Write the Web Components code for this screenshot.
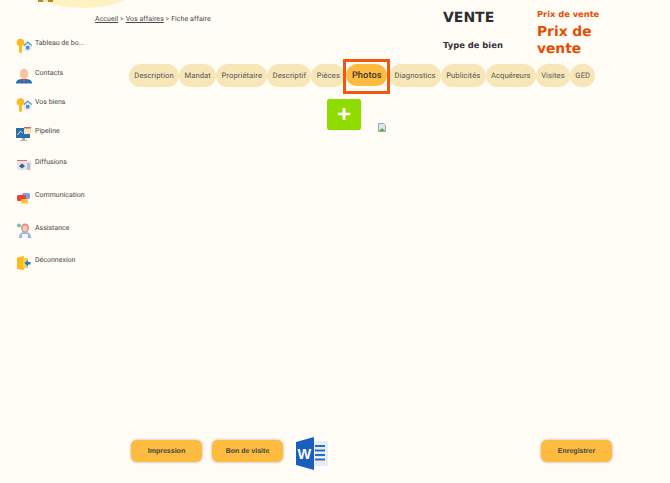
<!DOCTYPE html>
<html lang="fr">
<head>
<meta charset="utf-8">
<title>Fiche affaire</title>
<style>
html, body { margin: 0; height: 100%; }
body { background: #fffcf5; font-family: "Open Sans", sans-serif; color: #333; overflow: hidden; text-rendering: geometricPrecision; }
app-page { height: 483px; }
</style>
</head>
<body>
<template id="nav-item-tpl">
  <style>
    :host { display: flex; align-items: flex-start; gap: 3px; height: var(--h, 30px); font: 7px/10px "Roboto", "Open Sans", sans-serif; color: #4a4a4a; }
    .ic { width: 16px; height: 16px; flex: none; }
    span { display: block; }
  </style>
  <div class="ic"><slot name="icon"></slot></div>
  <span><slot></slot></span>
</template>

<template id="tab-pill-tpl">
  <style>
    :host { display: inline-flex; align-items: center; justify-content: center; height: 23px; padding: 0 5.3px; border-radius: 12px 12px 11px 11px; background: #f7e6b8; color: #555; font: 7.6px "Roboto", "Noto Sans", sans-serif; letter-spacing: .1px; white-space: nowrap; box-sizing: border-box; }
    :host([active]) { background: #fdbb3f; color: #333; font-weight: 500; font-size: 9.200px; padding: 0; width: 42px; height: 22px; }
  </style>
  <slot></slot>
</template>

<template id="app-button-tpl">
  <style>
    :host { display: inline-flex; align-items: center; justify-content: center; width: 71px; height: 22px; border-radius: 6px; background: #fdbb3f; color: #444; font: 700 7px "Liberation Sans", sans-serif; box-shadow: 0 0 3px rgba(120,110,90,.55); }
  </style>
  <slot></slot>
</template>

<template id="app-page-tpl">
  <style>
    :host { display: block; position: relative; height: 483px; width: 670px; overflow: hidden; }
    .blob { position: absolute; left: 29px; top: -30px; width: 108px; height: 38px; background: #fff2c2; border-radius: 0 0 54px 54px / 0 0 22px 22px; }
    .mark { position: absolute; left: 38px; top: 0; width: 15px; height: 2px; background: linear-gradient(90deg, #b8862f 0 30%, #f3e3b0 30% 65%, #b8862f 65%); }
    .layout { display: grid; grid-template-columns: 95px 1fr; height: 100%; }
    nav { padding: 38px 0 0 16px; display: flex; flex-direction: column; }
    main { display: flex; flex-direction: column; position: relative; }
    .head { display: flex; height: 64px; }
    .crumbs { padding-top: 14px; width: 348px; font: 7px/10px "Roboto", sans-serif; color: #4a4a4a; letter-spacing: .06px; white-space: nowrap; }
    .crumbs u { text-underline-offset: 1px; }
    .kind { width: 94px; font-family: "DejaVu Sans", sans-serif; color: #2d2d33; font-weight: 700; }
    .kind .v { font-size: 14px; line-height: 18px; margin-top: 9px; }
    .kind .t { font-size: 8.4px; line-height: 12px; margin-top: 12px; color: #33333a; }
    .price { font-family: "DejaVu Sans", sans-serif; color: #e24e05; width: 80px; }
    .price .s { font-size: 8.3px; font-weight: 700; line-height: 12px; margin-top: 8px; }
    .price .b { font-size: 13.8px; font-weight: 700; line-height: 17px; margin-top: 4px; }
    .tabs { display: flex; align-items: center; padding-left: 34px; height: 23px; }
    .sel { display: flex; align-items: flex-start; justify-content: center; width: 47px; height: 35px; padding-top: 2px; border: 3px solid #f4560f; box-sizing: border-box; margin: 2px -1px 0 -2px; flex: none; position: relative; z-index: 1; }
    .photos { display: flex; align-items: flex-start; padding: 12px 0 0 232px; height: 334px; }
    .add { width: 34px; height: 31px; border-radius: 2px; background: #8fdc00; display: flex; align-items: center; justify-content: center; color: #fff; font: 700 24px/1 "Liberation Sans", sans-serif; }
    .broken { width: 8px; height: 9px; margin: 24px 0 0 17px; }
    .actions { display: flex; align-items: center; padding: 0 0 0 36px; height: 36px; }
    .actions app-button + app-button { margin-left: 10px; }
    .word { width: 34px; height: 33px; margin: 5px 0 0 12px; }
    .actions .end { margin-left: 212px; }
    svg { display: block; }
  </style>
  <div class="blob"></div>
  <div class="mark"></div>
  <div class="layout">
    <nav>
      <nav-item style="--h:30px"><svg slot="icon" viewBox="0 0 16 16" width="16" height="16"><circle cx="11.500" cy="9" r="4.500" fill="#eceae4"/><circle cx="4.500" cy="4.500" r="3.800" fill="#fdbb1e"/><rect x="3" y="6" width="3" height="9" rx="1.400" fill="#fdbb1e"/><path d="M8 7.500l3.800-3.500 3.800 3.500" fill="none" stroke="#4b97e0" stroke-width="1.200"/><rect x="10" y="8" width="3.400" height="3.400" fill="#3f8fe0"/></svg>Tableau de bo...</nav-item>
      <nav-item style="--h:29px"><svg slot="icon" viewBox="0 0 16 16" width="16" height="16"><ellipse cx="8" cy="6" rx="4.200" ry="5.200" fill="#f7c3a0"/><path d="M0 15.500c0-3 2-4 5.500-4.500h5c3.500.5 5.500 1.500 5.500 4.500z" fill="#2671b8"/><path d="M6 11h4L8 14.500z" fill="#e0522a"/></svg>Contacts</nav-item>
      <nav-item style="--h:29px"><svg slot="icon" viewBox="0 0 16 16" width="16" height="16"><circle cx="11.500" cy="9" r="4.500" fill="#eceae4"/><circle cx="4.500" cy="5" r="3.800" fill="#fdbb1e"/><rect x="3" y="6" width="3" height="9" rx="1.400" fill="#fdbb1e"/><path d="M8 7.500l3.800-3.500 3.800 3.500" fill="none" stroke="#4b97e0" stroke-width="1.200"/><rect x="10" y="8" width="3.400" height="3.400" fill="#3f8fe0"/></svg>Vos biens</nav-item>
      <nav-item style="--h:31px"><svg slot="icon" viewBox="0 0 16 16" width="16" height="16"><rect x="0" y="2" width="14" height="10" fill="#2e6ea6"/><rect x="8" y="1" width="7" height="7" fill="#f3e4c4"/><rect x="8" y="1" width="7" height="1.500" fill="#e35f4a"/><path d="M1.500 9l3-4 2 2" fill="none" stroke="#cfe3f3" stroke-width="1"/><rect x="6" y="12" width="3" height="2" fill="#9aa6ad"/><rect x="4" y="14" width="7" height="1" fill="#b8c0c5"/></svg>Pipeline</nav-item>
      <nav-item style="--h:33px"><svg slot="icon" viewBox="0 0 16 16" width="16" height="16"><rect x="1" y="4" width="14" height="9" fill="#e3e5e8"/><rect x="1" y="3" width="10" height="1" fill="#e2705c"/><path d="M3 9l3-2.500 3 2.500-3 2.500z" fill="#34619a"/><rect x="11" y="6" width="3" height="7" fill="#b9bec5"/></svg>Diffusions</nav-item>
      <nav-item style="--h:33px"><svg slot="icon" viewBox="0 0 16 16" width="16" height="16"><rect x="6" y="3" width="8" height="6" rx="1.500" fill="#7f9df0"/><rect x="1" y="5" width="9" height="6" rx="1.500" fill="#e8423a"/><rect x="5" y="9" width="7" height="4.500" rx="1.500" fill="#fdc32e"/></svg>Communication</nav-item>
      <nav-item style="--h:32px"><svg slot="icon" viewBox="0 0 16 16" width="16" height="16"><circle cx="3" cy="2.500" r="2" fill="#6fc79a"/><ellipse cx="9" cy="5" rx="4" ry="4.500" fill="#d9918c"/><ellipse cx="9" cy="5.500" rx="2.500" ry="3" fill="#f6c9b4"/><path d="M3 15c0-4 2-6 6-6s6 2 6 6z" fill="#8fb7e6"/><rect x="6" y="11" width="6" height="4" fill="#f4f6f8"/></svg>Assistance</nav-item>
      <nav-item style="--h:30px"><svg slot="icon" viewBox="0 0 16 16" width="16" height="16"><path d="M1 2.500l7-1.500v14l-7-1z" fill="#fdbb1e"/><rect x="7" y="3" width="5" height="10" fill="#f7ce55"/><path d="M8.500 8l3.500-3v2h2.500v2.500H12v2z" fill="#1b77d8"/></svg>Déconnexion</nav-item>
    </nav>
    <main>
      <div class="head">
        <div class="crumbs"><u>Accueil</u> &gt; <u>Vos affaires</u> &gt; Fiche affaire</div>
        <div class="kind"><div class="v">VENTE</div><div class="t">Type de bien</div></div>
        <div class="price"><div class="s">Prix de vente</div><div class="b">Prix de vente</div></div>
      </div>
      <div class="tabs">
        <tab-pill>Description</tab-pill><tab-pill>Mandat</tab-pill><tab-pill>Propriétaire</tab-pill><tab-pill>Descriptif</tab-pill><tab-pill>Pièces</tab-pill>
        <div class="sel"><tab-pill active>Photos</tab-pill></div>
        <tab-pill>Diagnostics</tab-pill><tab-pill>Publicités</tab-pill><tab-pill>Acquéreurs</tab-pill><tab-pill>Visites</tab-pill><tab-pill>GED</tab-pill>
      </div>
      <div class="photos">
        <div class="add">+</div>
        <svg class="broken" viewBox="0 0 8 9" width="8" height="9"><path d="M.5.5h5l2 2v6h-7z" fill="#dfe6f0" stroke="#9aa5b5"/><path d="M1 8l3-3 3 3z" fill="#5cae3c"/></svg>
      </div>
      <div class="actions">
        <app-button>Impression</app-button>
        <app-button>Bon de visite</app-button>
        <svg class="word" viewBox="0 0 34 33" width="34" height="33"><rect width="34" height="33" fill="#fff"/><rect x="16" y="4" width="17" height="25" fill="#e8edf4"/><path d="M1 5L19 0v33L1 28z" fill="#1b5ebe"/><g stroke="#2b6cc8" stroke-width="2"><path d="M20 9h10M20 13.500h10M20 18h10M20 22.500h10"/></g><text x="2.500" y="21.500" fill="#fff" font-family="Liberation Sans, sans-serif" font-weight="700" font-size="14.500">W</text></svg>
        <app-button class="end">Enregistrer</app-button>
      </div>
    </main>
  </div>
</template>

<app-page></app-page>

<script>
  // meme principe pour tous les elements : on clone le template dans le shadow root
  function define(name, tplId) {
    customElements.define(name, class extends HTMLElement {
      constructor() {
        super();
        this.attachShadow({ mode: 'open' });
        this.shadowRoot.appendChild(document.getElementById(tplId).content.cloneNode(true));
      }
    });
  }
  define('nav-item', 'nav-item-tpl');
  define('tab-pill', 'tab-pill-tpl');
  define('app-button', 'app-button-tpl');
  define('app-page', 'app-page-tpl');
</script>
</body>
</html>
